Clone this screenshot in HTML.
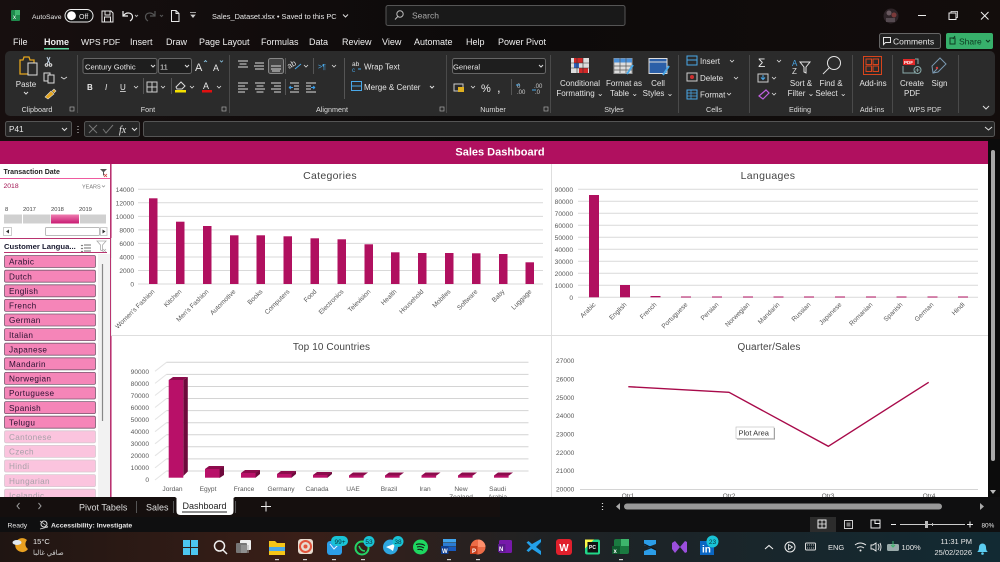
<!DOCTYPE html>
<html><head><meta charset="utf-8"><style>
html,body{margin:0;padding:0;background:#111;width:1000px;height:562px;overflow:hidden}
svg{display:block}
text{font-family:"Liberation Sans","Noto Sans CJK SC",sans-serif;fill:#e8e8e8;font-size:8px}
.m{font-size:9px;fill:#f0f0f0}
.r{font-size:8px;fill:#e4e4e4}
.g{font-size:7px;fill:#d0d0d0}
.c{font-size:6.6px;fill:#595959}
.a{font-size:6.6px;fill:#595959}
.t{font-size:10.5px;fill:#444;letter-spacing:.3px}
.s{font-size:8.2px;fill:#2a1030;letter-spacing:.35px}
.u{font-size:8.2px;fill:#a8a0a8;letter-spacing:.35px}
.b{fill:#f585b8;stroke:#7a5a70;stroke-width:.8}
.w{fill:#fbc4de;stroke:#d8c8d0;stroke-width:.8}
.ic{fill:none;stroke:#e6e6e6;stroke-width:1}
.badge{fill:#19c3d6}
.bt{font-size:6.5px;fill:#06343a;text-anchor:middle}
</style></head><body>
<svg width="1000" height="562" viewBox="0 0 1000 562" xmlns="http://www.w3.org/2000/svg">
<defs>
<linearGradient id="top" x1="0" x2="1" y1="0" y2="0"><stop offset="0" stop-color="#170f0f"/><stop offset=".5" stop-color="#0c0a0a"/><stop offset="1" stop-color="#130d0c"/></linearGradient>
<linearGradient id="tb" x1="0" x2="1" y1="0" y2="0"><stop offset="0" stop-color="#1f1512"/><stop offset=".3" stop-color="#3a1f18"/><stop offset=".55" stop-color="#1f2224"/><stop offset="1" stop-color="#122a33"/></linearGradient>
<linearGradient id="sel" x1="0" x2="0" y1="0" y2="1"><stop offset="0" stop-color="#ee7db0"/><stop offset="1" stop-color="#c81a72"/></linearGradient>
</defs>
<rect width="1000" height="141" fill="url(#top)"/>

<!-- title bar -->
<rect x="11" y="10" width="9" height="11" rx="1" fill="#1f8a4c"/><rect x="15" y="10" width="5" height="5" fill="#3fb56e"/>
<text x="13" y="19" style="font-size:6px;fill:#fff">x</text>
<text x="32" y="19" style="font-size:6.800px">AutoSave</text>
<rect x="65" y="9.500" width="28" height="12.500" rx="6.200" fill="#111" stroke="#eee"/><circle cx="71.500" cy="15.700" r="4.400" fill="#fff"/><text x="79" y="19" style="font-size:7px">Off</text>
<path class="ic" d="M102 11h9l2 2v9h-11zM105 11v4h5v-4M104.500 22v-5h6v5"/>
<path d="M123 11v5h5M123.500 15.500c3-4 9-3 9 1.500 0 2-1 3-2.500 4" fill="none" stroke="#eee" stroke-width="1.200"/>
<path d="M135 15l1.500 1.500L138 15" fill="none" stroke="#aaa"/>
<path d="M155 11v5h-5M154.500 15.500c-3-4-9-3-9 1.500 0 2 1 3 2.500 4" fill="none" stroke="#555" stroke-width="1.200"/>
<path d="M160 15l1.500 1.500L163 15" fill="none" stroke="#555"/>
<path class="ic" d="M171.500 10.500h4.500l3 3v8h-7.500zM176 10.500v3h3"/>
<path d="M190 12.500h6M191 15h4l-2 2.500z" fill="#ccc" stroke="#ccc" stroke-width=".7"/>
<text x="212" y="19" style="font-size:7.400px">Sales_Dataset.xlsx &#8226; Saved to this PC</text>
<path d="M343 14.500l2.500 2.500 2.500-2.500" fill="none" stroke="#ddd"/>
<rect x="386" y="5.500" width="239" height="20" rx="2" fill="#191919" stroke="#555"/>
<circle cx="400" cy="14" r="3.200" class="ic" style="stroke:#bbb"/><path d="M397.800 16.500l-2.800 3" stroke="#bbb"/>
<text x="412" y="18.500" style="font-size:8.500px;fill:#aaa">Search</text>
<circle cx="891" cy="16" r="7.500" fill="#2e2428"/><circle cx="889" cy="13" r="2.500" fill="#6a5a60"/><circle cx="894" cy="15" r="2.500" fill="#7a3a3a"/><rect x="886" y="18" width="9" height="4" fill="#554a50"/>
<path d="M918 15.500h8" stroke="#eee"/><rect x="949" y="13" width="7" height="6.500" fill="none" stroke="#eee"/><path d="M951 13v-1.500h6.500v6H956" fill="none" stroke="#eee" stroke-width=".8"/>
<path d="M981 12l7.500 7.500M988.500 12l-7.500 7.500" stroke="#eee"/>

<!-- menu -->
<text class="m" x="13" y="45">File</text><text class="m" x="44" y="45" style="font-weight:bold">Home</text>
<rect x="44" y="48" width="25" height="1.500" fill="#5ed6a0"/>
<text class="m" x="81" y="45" style="font-size:8.600px">WPS PDF</text><text class="m" x="130" y="45">Insert</text><text class="m" x="166" y="45">Draw</text><text class="m" x="199" y="45">Page Layout</text><text class="m" x="261" y="45">Formulas</text><text class="m" x="309" y="45">Data</text><text class="m" x="342" y="45">Review</text><text class="m" x="382" y="45">View</text><text class="m" x="414" y="45">Automate</text><text class="m" x="466" y="45">Help</text><text class="m" x="498" y="45">Power Pivot</text>
<rect x="879.500" y="33.500" width="61" height="15" rx="2" fill="#222" stroke="#666"/>
<path class="ic" d="M883.500 37.500h7v5h-5l-2 2z"/><text x="893" y="44.500" style="font-size:8.500px">Comments</text>
<rect x="946" y="33" width="47" height="16" rx="2" fill="#37b06b"/><text x="959" y="44.500" style="font-size:8.500px;fill:#0d3a20">Share</text>
<path d="M950 38h5v6h-5zM955 36l-2 3" fill="none" stroke="#0d3a20"/><path d="M986 40l2 2 2-2" fill="none" stroke="#0d3a20"/>

<!-- ribbon -->
<rect x="5" y="51" width="990" height="65" rx="5" fill="#2b2b2b"/>
<g stroke="#4a4a4a"><path d="M77.500 55v58M229.500 55v58M446.500 55v58M550.500 55v58M678.500 55v58M749.500 55v58M852.500 55v58M892.500 55v58M958.500 55v58"/></g>
<!-- clipboard -->
<path d="M20 60h3l1-3h5l1 3h4v3h-3v11h-11z" fill="none" stroke="#e3a41c" stroke-width="1.300"/><rect x="28" y="63" width="9" height="12" fill="#2b2b2b" stroke="#ddd"/>
<text x="26" y="87" class="r" text-anchor="middle">Paste</text><path d="M24 92l2 2 2-2" fill="none" stroke="#ddd"/>
<path d="M47 57l3 7M50 57l-3 7" stroke="#bcd" fill="none"/><circle cx="46.500" cy="65" r="1.300" class="ic"/><circle cx="50.500" cy="65" r="1.300" class="ic"/>
<rect x="44" y="73" width="6" height="8" fill="none" stroke="#ddd"/><rect x="48" y="75" width="6" height="8" fill="#2b2b2b" stroke="#ddd"/>
<path d="M61 77l3 2 3-2" fill="none" stroke="#ddd" stroke-width=".8"/>
<path d="M45 97l6-6 3 3-6 5zM52 91l2-2 2 2-2 2" fill="#e3a41c" stroke="#ddd" stroke-width=".6"/>
<text x="37" y="112" style="font-size:7.200px;fill:#ddd" text-anchor="middle">Clipboard</text>
<rect x="70" y="107" width="4" height="4" fill="none" stroke="#aaa" stroke-width=".7"/>
<!-- font -->
<rect x="83" y="58.500" width="74" height="15" rx="2" fill="#1e1e1e" stroke="#666"/><text x="85" y="69.500" style="font-size:7.600px">Century Gothic</text><path d="M151 65l2 2 2-2" fill="none" stroke="#ddd"/>
<rect x="158.500" y="58.500" width="33" height="15" rx="2" fill="#1e1e1e" stroke="#666"/><text x="160" y="69.500" style="font-size:7.600px">11</text><path d="M185 65l2 2 2-2" fill="none" stroke="#ddd"/>
<text x="195" y="71" style="font-size:11px">A</text><text x="213" y="71" style="font-size:9px">A</text>
<path d="M204 62l1.500-1.500L207 62M220 60.500l1.500 1.500 1.500-1.500" fill="none" stroke="#8cc8e8" stroke-width=".8"/>
<text x="87" y="90" style="font-size:8px;font-weight:bold">B</text><text x="105" y="90" style="font-size:8px;font-style:italic">I</text><text x="120" y="90" style="font-size:8px;text-decoration:underline">U</text>
<path d="M134 86l2 2 2-2M161 86l2 2 2-2M190 86l2 2 2-2M217 86l2 2 2-2" fill="none" stroke="#ddd" stroke-width=".8"/>
<path d="M143.500 78v16" stroke="#555"/><rect x="147" y="82" width="10" height="10" fill="none" stroke="#ccc"/><path d="M147 87h10M152 82v10" stroke="#ccc"/>
<path d="M171.500 78v16" stroke="#555"/><path d="M176 87l5-5 4 4-3 3h-5z" fill="none" stroke="#ddd"/><rect x="175" y="90" width="11" height="2.500" fill="#f4e000"/>
<text x="203" y="89" style="font-size:9px">A</text><rect x="202" y="90" width="10" height="2.500" fill="#e01010"/>
<text x="148" y="112" style="font-size:7.200px;fill:#ddd" text-anchor="middle">Font</text>
<rect x="222" y="107" width="4" height="4" fill="none" stroke="#aaa" stroke-width=".7"/>
<!-- alignment -->
<g stroke="#dcdcdc" fill="none"><path d="M238 61h10M239.500 64h7M238 67h10"/><path d="M255 63h9M254 66h10M255 69h9"/>
<rect x="268.500" y="58.500" width="15" height="15" rx="2" fill="#444" stroke="#888"/><path d="M271 66h10M271 69h10M272 71h8"/>
<path d="M238 83h10M238 86h7M238 89h10M238 92h7M255 83h10M256.500 86h7M255 89h10M256.500 92h7M271 83h10M274 86h7M271 89h10M274 92h7"/>
<path d="M290 83h9M290 92h9M294 86h5M294 89h5"/><path d="M306 83h10M306 92h10M306 86h5M306 89h5"/></g>
<path d="M289 87.500h4M289 87.500l2-1.500M289 87.500l2 1.500M311 87.500h4M315 87.500l-2-1.500M315 87.500l-2 1.500" stroke="#3b9de8" fill="none"/>
<text x="289" y="69" style="font-size:8px;fill:#ddd" transform="rotate(-30 289 69)">ab</text><path d="M295 69l6-5" stroke="#4aa8e8"/><path d="M304 65l2 2 2-2M332 65l2 2 2-2" fill="none" stroke="#ddd" stroke-width=".8"/>
<path d="M285.500 58v16M313.500 58v16M285.500 79v16" stroke="#555"/>
<text x="318" y="69" style="font-size:7px;fill:#4aa8e8">&gt;&#182;</text>
<path d="M344.500 58v41" stroke="#555"/>
<text x="352" y="66" style="font-size:6.500px">ab</text><text x="352" y="72" style="font-size:6px;fill:#4aa8e8">c</text><path d="M358 69h3" stroke="#4aa8e8"/>
<text x="364" y="69.500" class="r">Wrap Text</text>
<rect x="351.500" y="81.500" width="10" height="9" fill="none" stroke="#4aa8e8"/><path d="M352 86h9" stroke="#4aa8e8"/>
<text x="364" y="90" class="r">Merge &amp; Center</text><path d="M430 86l2 2 2-2" fill="none" stroke="#ddd"/>
<text x="332" y="112" style="font-size:7.200px;fill:#ddd" text-anchor="middle">Alignment</text>
<rect x="440" y="107" width="4" height="4" fill="none" stroke="#aaa" stroke-width=".7"/>
<!-- number -->
<rect x="452.500" y="58.500" width="93" height="15" rx="2" fill="#1e1e1e" stroke="#666"/><text x="453" y="69.500" style="font-size:7.600px">General</text><path d="M539 65l2 2 2-2" fill="none" stroke="#ddd"/>
<rect x="454" y="84" width="9" height="7" fill="none" stroke="#ccc"/><rect x="458" y="87" width="6" height="5" fill="#e0b020"/>
<path d="M471 86l2 2 2-2" fill="none" stroke="#ddd" stroke-width=".8"/><text x="481" y="92" style="font-size:11px">%</text><text x="497" y="92" style="font-size:13px">,</text>
<path d="M511.500 79v16" stroke="#555"/><text x="517" y="88" style="font-size:6px;fill:#ccc">0</text><text x="517" y="94" style="font-size:6px;fill:#ccc">.00</text><path d="M516 85h4" stroke="#4aa8e8"/>
<text x="534" y="88" style="font-size:6px;fill:#ccc">.00</text><text x="535" y="94" style="font-size:6px;fill:#ccc">.0</text><path d="M532 90h4" stroke="#4aa8e8"/>
<text x="493" y="112" style="font-size:7.200px;fill:#ddd" text-anchor="middle">Number</text>
<rect x="544" y="107" width="4" height="4" fill="none" stroke="#aaa" stroke-width=".7"/>
<!-- styles -->
<rect x="571" y="58" width="18" height="15" fill="#ddd"/><rect x="574" y="58" width="9" height="5" fill="#d02828"/><rect x="574" y="63" width="5" height="5" fill="#3060c0"/><rect x="579" y="68" width="9" height="5" fill="#d02828"/><path d="M571 63h18M571 68h18M577 58v15M583 58v15" stroke="#333" stroke-width=".6"/>
<text x="580" y="86" class="r" text-anchor="middle">Conditional</text><text x="580" y="96" class="r" text-anchor="middle">Formatting &#8964;</text>
<rect x="614" y="58.500" width="18" height="15" fill="#ddd" stroke="#999"/><rect x="614" y="58.500" width="18" height="4" fill="#4a90d8"/><path d="M614 66h18M614 70h18M620 58v15M626 58v15" stroke="#555" stroke-width=".7"/><path d="M627 74l6-9" stroke="#4aa8e8" stroke-width="2"/>
<text x="624" y="86" class="r" text-anchor="middle">Format as</text><text x="624" y="96" class="r" text-anchor="middle">Table &#8964;</text>
<rect x="649" y="58.500" width="18" height="15" fill="#2b5fa8" stroke="#ddd"/><path d="M649 62h18" stroke="#ddd"/><path d="M663 75l6-9" stroke="#4aa8e8" stroke-width="2"/>
<text x="658" y="86" class="r" text-anchor="middle">Cell</text><text x="658" y="96" class="r" text-anchor="middle">Styles &#8964;</text>
<text x="614" y="112" style="font-size:7.200px;fill:#ddd" text-anchor="middle">Styles</text>
<!-- cells -->
<rect x="687" y="56" width="10" height="9" fill="none" stroke="#4aa8e8"/><path d="M687 60h10" stroke="#4aa8e8"/>
<rect x="687" y="73" width="10" height="8" fill="none" stroke="#ccc"/><circle cx="692" cy="77" r="2" fill="#d03030"/>
<rect x="687" y="90" width="10" height="9" fill="none" stroke="#4aa8e8"/><path d="M687 93h10M687 96h10M691 90v9" stroke="#4aa8e8" stroke-width=".7"/>
<text x="700" y="64" class="r">Insert</text><text x="700" y="81" class="r">Delete</text><text x="700" y="97.500" class="r">Format</text>
<path d="M730 60l2 2 2-2M734 77l2 2 2-2M727 93l2 2 2-2" fill="none" stroke="#ddd" stroke-width=".8"/>
<text x="714" y="112" style="font-size:7.200px;fill:#ddd" text-anchor="middle">Cells</text>
<!-- editing -->
<text x="758" y="67" style="font-size:12px">&#931;</text><path d="M777 60l2 2 2-2M772 77l2 2 2-2M772 93l2 2 2-2" fill="none" stroke="#ddd" stroke-width=".8"/>
<rect x="758" y="74" width="10" height="8" fill="none" stroke="#ccc"/><path d="M763 75v4M761 77.500l2 2 2-2" stroke="#4aa8e8" fill="none"/>
<path d="M759 96l7-6 3 3-6 6z" fill="none" stroke="#c060e0" stroke-width="1.200"/>
<text x="792" y="66" style="font-size:8px;fill:#4aa8e8">A</text><text x="792" y="74" style="font-size:8px;fill:#ddd">Z</text>
<path class="ic" d="M800 62h10l-4 5v6l-2-1v-5z"/>
<text x="801" y="86" class="r" text-anchor="middle">Sort &amp;</text><text x="801" y="96" class="r" text-anchor="middle">Filter &#8964;</text>
<circle cx="834" cy="63" r="6.500" class="ic"/><path d="M829 68l-6 6" stroke="#ddd"/>
<text x="831" y="86" class="r" text-anchor="middle">Find &amp;</text><text x="831" y="96" class="r" text-anchor="middle">Select &#8964;</text>
<text x="800" y="112" style="font-size:7.200px;fill:#ddd" text-anchor="middle">Editing</text>
<!-- addins -->
<rect x="863.500" y="56.500" width="18" height="18" fill="none" stroke="#d8441c"/><rect x="866" y="59" width="5.500" height="5.500" fill="none" stroke="#d8441c"/><rect x="873" y="59" width="5.500" height="5.500" fill="none" stroke="#d8441c"/><rect x="866" y="66" width="5.500" height="5.500" fill="none" stroke="#d8441c"/><rect x="873" y="66" width="5.500" height="5.500" fill="none" stroke="#d8441c"/>
<text x="873" y="86" class="r" text-anchor="middle">Add-ins</text>
<text x="872" y="112" style="font-size:7.200px;fill:#ddd" text-anchor="middle">Add-ins</text>
<!-- wps -->
<rect x="903" y="59" width="12" height="6" fill="#e02828"/><text x="904" y="64" style="font-size:4.500px;font-weight:bold;fill:#fff">PDF</text><path class="ic" d="M903 66v7h12v-2M915 59h3v5" style="stroke:#8aa"/><circle cx="917.500" cy="70" r="3.500" class="ic" style="stroke:#8aa"/><path d="M915.500 70h4M917.500 68v4" stroke="#8aa" stroke-width=".7"/>
<text x="912" y="86" class="r" text-anchor="middle">Create</text><text x="912" y="96" class="r" text-anchor="middle">PDF</text>
<path class="ic" d="M933 73l-1-7 8-8 6 6-8 8zM933 73l4-4" style="stroke:#7a98b0"/><circle cx="937" cy="68" r="1.200" fill="#d04040"/>
<text x="939.500" y="86" class="r" text-anchor="middle">Sign</text>
<text x="925" y="112" style="font-size:7.200px;fill:#ddd" text-anchor="middle">WPS PDF</text>
<path d="M983 106l3 3 3-3" fill="none" stroke="#ddd"/>

<!-- formula bar -->
<rect x="5.500" y="121.500" width="66" height="15" rx="2" fill="#262626" stroke="#555"/><text x="9" y="132" style="font-size:8.200px">P41</text><path d="M62 128l2.500 2.500 2.500-2.500" fill="none" stroke="#ddd"/>
<path d="M78 126v.8M78 129v.8M78 132v.8" stroke="#ddd" stroke-width="1.300"/>
<rect x="84.500" y="121.500" width="55" height="15" rx="2" fill="#262626" stroke="#555"/>
<path d="M89 125l8 8M97 125l-8 8M103 129l3 4 7-8" stroke="#777" fill="none"/>
<text x="119" y="133" style="font-size:10px;font-style:italic;font-family:'Liberation Serif',serif">fx</text><path d="M132 128l2.500 2.500 2.500-2.500" fill="none" stroke="#ddd"/>
<rect x="143.500" y="121.500" width="851" height="15" rx="2" fill="#262626" stroke="#555"/><path d="M985 127l3.500 3 3.500-3" fill="none" stroke="#ddd"/>

<!-- sheet -->
<rect x="0" y="141" width="988" height="356" fill="#fff"/>
<rect x="0" y="141" width="988" height="23" fill="#b0105f"/>
<text x="500" y="155.500" text-anchor="middle" style="font-size:11px;font-weight:bold;fill:#fff">Sales Dashboard</text>
<rect x="988" y="139" width="12" height="358" fill="#0c0c0c"/>
<rect x="991" y="150" width="4" height="311" rx="2" fill="#a8a8a8"/><path d="M990 490h6l-3 4z" fill="#bbb"/>
<path d="M111 164v74" stroke="#b0105f"/><path d="M111.500 238v20" stroke="#e8e8e8"/><path d="M111 335v162" stroke="#b0105f"/>
<path d="M111 258v77" stroke="#e6e0e4"/>
<path d="M551.500 164v333M111 335.500h877" stroke="#dedede"/>

<!-- slicer 1 -->
<rect x="0" y="164" width="110" height="74" fill="#fff"/>
<path d="M110.500 164v333" stroke="#b8336f"/>
<text x="3.500" y="174" style="font-size:7px;font-weight:bold;fill:#222">Transaction Date</text>
<path d="M100 169h7l-3 3v4l-1-1v-3z" fill="#555"/><path d="M104 174l3 3M107 174l-3 3" stroke="#d04040" stroke-width=".8"/>
<path d="M0 178.500h110" stroke="#ef5ba0"/>
<text x="3.500" y="188" style="font-size:6.800px;fill:#a0104f">2018</text>
<text x="82" y="188.500" style="font-size:5.500px;fill:#777">YEARS</text><path d="M102 185.500l1.500 1.500 1.500-1.500" fill="none" stroke="#888" stroke-width=".7"/>
<text x="5" y="211" style="font-size:5.800px;fill:#444">8</text><text x="23" y="211" style="font-size:5.800px;fill:#444">2017</text><text x="51" y="211" style="font-size:5.800px;fill:#444">2018</text><text x="79" y="211" style="font-size:5.800px;fill:#444">2019</text>
<rect x="4" y="214.500" width="18" height="9" fill="#d0d0d0"/><rect x="23" y="214.500" width="27.500" height="9" fill="#d0d0d0"/><rect x="51" y="214.500" width="28" height="9" fill="url(#sel)"/><rect x="80" y="214.500" width="26" height="9" fill="#d0d0d0"/>
<rect x="3.500" y="227.500" width="8" height="8" fill="#fff" stroke="#ccc"/><path d="M9 229.500l-3 2 3 2z" fill="#333"/>
<rect x="45.500" y="227.500" width="54" height="8" rx="1" fill="#fff" stroke="#bbb"/>
<rect x="100.500" y="227.500" width="6.500" height="8" fill="#fff" stroke="#ccc"/><path d="M102.500 229.500l3 2-3 2z" fill="#333"/>
<path d="M0 238.500h110" stroke="#b8336f"/>

<!-- slicer 2 -->
<text x="4" y="249" style="font-size:7.700px;font-weight:bold;fill:#1a1a30">Customer Langua...</text>
<path d="M84 245h7M84 248h7M84 251h7" stroke="#444" stroke-width=".8"/><path d="M81 245l1 1 1-1M81 248l1 1 1-1M81 251l1 1 1-1" stroke="#444" stroke-width=".6" fill="none"/>
<path d="M97 241h9l-3.500 4v6l-2-1v-5z" fill="none" stroke="#aaa" stroke-width=".8"/><path d="M103 249l3 3M106 249l-3 3" stroke="#aaa" stroke-width=".7"/>
<path d="M4 252.500h103" stroke="#b8336f"/>
<rect x="98" y="254" width="12" height="243" fill="#f2f2f2"/><path d="M102.500 264v157" stroke="#888" stroke-width="1.200"/>
<g>
<rect class="b" x="4.500" y="255.500" width="91" height="12" rx="1.500"/><text class="s" x="9" y="264.700">Arabic</text>
<rect class="b" x="4.500" y="270.200" width="91" height="12" rx="1.500"/><text class="s" x="9" y="279.400">Dutch</text>
<rect class="b" x="4.500" y="284.800" width="91" height="12" rx="1.500"/><text class="s" x="9" y="294">English</text>
<rect class="b" x="4.500" y="299.400" width="91" height="12" rx="1.500"/><text class="s" x="9" y="308.600">French</text>
<rect class="b" x="4.500" y="314" width="91" height="12" rx="1.500"/><text class="s" x="9" y="323.200">German</text>
<rect class="b" x="4.500" y="328.600" width="91" height="12" rx="1.500"/><text class="s" x="9" y="337.800">Italian</text>
<rect class="b" x="4.500" y="343.200" width="91" height="12" rx="1.500"/><text class="s" x="9" y="352.400">Japanese</text>
<rect class="b" x="4.500" y="357.800" width="91" height="12" rx="1.500"/><text class="s" x="9" y="367">Mandarin</text>
<rect class="b" x="4.500" y="372.400" width="91" height="12" rx="1.500"/><text class="s" x="9" y="381.600">Norwegian</text>
<rect class="b" x="4.500" y="387" width="91" height="12" rx="1.500"/><text class="s" x="9" y="396.200">Portuguese</text>
<rect class="b" x="4.500" y="401.600" width="91" height="12" rx="1.500"/><text class="s" x="9" y="410.800">Spanish</text>
<rect class="b" x="4.500" y="416.200" width="91" height="12" rx="1.500"/><text class="s" x="9" y="425.400">Telugu</text>
<rect class="w" x="4.500" y="430.800" width="91" height="12" rx="1.500"/><text class="u" x="9" y="440">Cantonese</text>
<rect class="w" x="4.500" y="445.400" width="91" height="12" rx="1.500"/><text class="u" x="9" y="454.600">Czech</text>
<rect class="w" x="4.500" y="460" width="91" height="12" rx="1.500"/><text class="u" x="9" y="469.200">Hindi</text>
<rect class="w" x="4.500" y="474.600" width="91" height="12" rx="1.500"/><text class="u" x="9" y="483.800">Hungarian</text>
<rect class="w" x="4.500" y="489.200" width="91" height="12" rx="1.500"/><text class="u" x="9" y="498.400">Icelandic</text>
</g>

<!-- Categories -->
<text class="t" x="330" y="179" text-anchor="middle">Categories</text>
<path d="M138 189.300h405M138 202.800h405M138 216.400h405M138 229.900h405M138 243.400h405M138 257h405M138 270.500h405M138 284h405" stroke="#d9d9d9"/>
<g text-anchor="end"><text class="a" x="134" y="192">14000</text><text class="a" x="134" y="205.500">12000</text><text class="a" x="134" y="219">10000</text><text class="a" x="134" y="232.500">8000</text><text class="a" x="134" y="246">6000</text><text class="a" x="134" y="259.500">4000</text><text class="a" x="134" y="273">2000</text><text class="a" x="134" y="286.500">0</text></g>
<g fill="#b0105f">
<rect x="149" y="198.300" width="8.500" height="85.700"/><rect x="176" y="221.700" width="8.500" height="62.300"/><rect x="203" y="226" width="8.500" height="58"/><rect x="230" y="235.300" width="8.500" height="48.700"/><rect x="256.500" y="235.300" width="8.500" height="48.700"/><rect x="283.500" y="236.300" width="8.500" height="47.700"/><rect x="310.500" y="238.300" width="8.500" height="45.700"/><rect x="337.500" y="239.300" width="8.500" height="44.700"/><rect x="364.500" y="244.300" width="8.500" height="39.700"/><rect x="391" y="252.300" width="8.500" height="31.700"/><rect x="418" y="253" width="8.500" height="31"/><rect x="445" y="253" width="8.500" height="31"/><rect x="472" y="253.300" width="8.500" height="30.700"/><rect x="499" y="254" width="8.500" height="30"/><rect x="525.500" y="262.300" width="8.500" height="21.700"/>
</g>
<g text-anchor="end">
<text class="c" transform="rotate(-45 155 292)" x="155" y="292">Women's Fashion</text>
<text class="c" transform="rotate(-45 182 292)" x="182" y="292">Kitchen</text>
<text class="c" transform="rotate(-45 209 292)" x="209" y="292">Men's Fashion</text>
<text class="c" transform="rotate(-45 236 292)" x="236" y="292">Automotive</text>
<text class="c" transform="rotate(-45 263 292)" x="263" y="292">Books</text>
<text class="c" transform="rotate(-45 290 292)" x="290" y="292">Computers</text>
<text class="c" transform="rotate(-45 317 292)" x="317" y="292">Food</text>
<text class="c" transform="rotate(-45 344 292)" x="344" y="292">Electronics</text>
<text class="c" transform="rotate(-45 371 292)" x="371" y="292">Television</text>
<text class="c" transform="rotate(-45 397 292)" x="397" y="292">Health</text>
<text class="c" transform="rotate(-45 424 292)" x="424" y="292">Household</text>
<text class="c" transform="rotate(-45 451 292)" x="451" y="292">Mobiles</text>
<text class="c" transform="rotate(-45 478 292)" x="478" y="292">Software</text>
<text class="c" transform="rotate(-45 505 292)" x="505" y="292">Baby</text>
<text class="c" transform="rotate(-45 532 292)" x="532" y="292">Luggage</text>
</g>

<!-- Languages -->
<text class="t" x="768" y="179" text-anchor="middle">Languages</text>
<path d="M578 189.300h400M578 201.300h400M578 213.300h400M578 225.300h400M578 237.300h400M578 249.300h400M578 261.300h400M578 273.300h400M578 285.300h400M578 297.300h400" stroke="#d9d9d9"/>
<g text-anchor="end"><text class="a" x="573" y="192">90000</text><text class="a" x="573" y="204">80000</text><text class="a" x="573" y="216">70000</text><text class="a" x="573" y="228">60000</text><text class="a" x="573" y="240">50000</text><text class="a" x="573" y="252">40000</text><text class="a" x="573" y="264">30000</text><text class="a" x="573" y="276">20000</text><text class="a" x="573" y="288">10000</text><text class="a" x="573" y="300">0</text></g>
<g fill="#b0105f"><rect x="589" y="195" width="10" height="102.300"/><rect x="620" y="285" width="10" height="12.300"/><rect x="650.500" y="296" width="10" height="1.300"/><rect x="681" y="296.500" width="10" height="1"/><rect x="712" y="296.500" width="10" height="1"/><rect x="743" y="296.500" width="10" height="1"/><rect x="773.500" y="296.500" width="10" height="1"/><rect x="804" y="296.500" width="10" height="1"/><rect x="835" y="296.500" width="10" height="1"/><rect x="866" y="296.500" width="10" height="1"/><rect x="896.500" y="296.500" width="10" height="1"/><rect x="927.500" y="296.500" width="10" height="1"/><rect x="958" y="296.500" width="10" height="1"/></g>
<g text-anchor="end">
<text class="c" transform="rotate(-45 596 305)" x="596" y="305">Arabic</text>
<text class="c" transform="rotate(-45 627 305)" x="627" y="305">English</text>
<text class="c" transform="rotate(-45 657 305)" x="657" y="305">French</text>
<text class="c" transform="rotate(-45 688 305)" x="688" y="305">Portuguese</text>
<text class="c" transform="rotate(-45 719 305)" x="719" y="305">Persian</text>
<text class="c" transform="rotate(-45 750 305)" x="750" y="305">Norwegian</text>
<text class="c" transform="rotate(-45 780 305)" x="780" y="305">Mandarin</text>
<text class="c" transform="rotate(-45 811 305)" x="811" y="305">Russian</text>
<text class="c" transform="rotate(-45 842 305)" x="842" y="305">Japanese</text>
<text class="c" transform="rotate(-45 873 305)" x="873" y="305">Romanian</text>
<text class="c" transform="rotate(-45 903 305)" x="903" y="305">Spanish</text>
<text class="c" transform="rotate(-45 934 305)" x="934" y="305">German</text>
<text class="c" transform="rotate(-45 965 305)" x="965" y="305">Hindi</text>
</g>

<!-- Top 10 -->
<text class="t" x="331.500" y="350" text-anchor="middle" style="font-size:10px;letter-spacing:.1px">Top 10 Countries</text>
<path d="M166.500 362.300h362M166.500 374.400h362M166.500 386.500h362M166.500 398.500h362M166.500 410.600h362M166.500 422.700h362M166.500 434.800h362M166.500 446.800h362M166.500 458.900h362M166.500 471h362" stroke="#d4d4d4"/>
<path d="M155 371.300l11.500-9M155 383.400l11.500-9M155 395.500l11.500-9M155 407.500l11.500-9M155 419.600l11.500-9M155 431.700l11.500-9M155 443.800l11.500-9M155 455.800l11.500-9M155 467.900l11.500-9M155 480l11.500-9" stroke="#e4e4e4"/>
<g text-anchor="end"><text class="a" x="149" y="374">90000</text><text class="a" x="149" y="386">80000</text><text class="a" x="149" y="398">70000</text><text class="a" x="149" y="410">60000</text><text class="a" x="149" y="422">50000</text><text class="a" x="149" y="434">40000</text><text class="a" x="149" y="446">30000</text><text class="a" x="149" y="458">20000</text><text class="a" x="149" y="470">10000</text><text class="a" x="149" y="482">0</text></g>
<g>
<path d="M168.700 380l4.300-3h14.800l-4.500 3z" fill="#8c0c4c"/><path d="M183.300 380l4.500-3v94.500l-4.500 4.500z" fill="#6e0a3c"/><rect x="168.700" y="380" width="14.600" height="97.700" fill="#b81068"/>
<path d="M205 469l4-3h15l-4 3z" fill="#8c0c4c"/><path d="M219.500 469l4.500-3v9l-4.500 3z" fill="#6e0a3c"/><rect x="205" y="469" width="14.600" height="8.700" fill="#b81068"/>
<path d="M241 473l4-3h15l-4 3z" fill="#8c0c4c"/><path d="M255.500 473l4.500-3v4l-4.500 3.700z" fill="#6e0a3c"/><rect x="241" y="473" width="14.600" height="4.700" fill="#b81068"/>
<path d="M277 474l4-3h15l-4 3z" fill="#8c0c4c"/><path d="M291.500 474l4.500-3v3l-4.500 3.700z" fill="#6e0a3c"/><rect x="277" y="474" width="14.600" height="3.700" fill="#b81068"/>
<path d="M313 475l4-3h15l-4 3z" fill="#8c0c4c"/><path d="M327.500 475l4.500-3v2l-4.500 3.700z" fill="#6e0a3c"/><rect x="313" y="475" width="14.600" height="2.700" fill="#b81068"/>
<path d="M349 475.500l4-3h15l-4 3z" fill="#8c0c4c"/><rect x="349" y="475.500" width="14.600" height="2.200" fill="#b81068"/>
<path d="M385 475.500l4-3h15l-4 3z" fill="#8c0c4c"/><rect x="385" y="475.500" width="14.600" height="2.200" fill="#b81068"/>
<path d="M421.500 475.500l4-3h15l-4 3z" fill="#8c0c4c"/><rect x="421.500" y="475.500" width="14.600" height="2.200" fill="#b81068"/>
<path d="M458 475.500l4-3h15l-4 3z" fill="#8c0c4c"/><rect x="458" y="475.500" width="14.600" height="2.200" fill="#b81068"/>
<path d="M494 475.500l4-3h15l-4 3z" fill="#8c0c4c"/><rect x="494" y="475.500" width="14.600" height="2.200" fill="#b81068"/>
</g>
<g text-anchor="middle">
<text class="c" x="172.500" y="491">Jordan</text><text class="c" x="208" y="491">Egypt</text><text class="c" x="244" y="491">France</text><text class="c" x="281" y="491">Germany</text><text class="c" x="317" y="491">Canada</text><text class="c" x="353" y="491">UAE</text><text class="c" x="389" y="491">Brazil</text><text class="c" x="425" y="491">Iran</text><text class="c" x="461" y="491">New</text><text class="c" x="461" y="499">Zealand</text><text class="c" x="497.500" y="491">Saudi</text><text class="c" x="497.500" y="499">Arabia</text>
</g>

<!-- Quarter -->
<text class="t" x="769" y="350" text-anchor="middle" style="font-size:10px;letter-spacing:.1px">Quarter/Sales</text>
<g><text class="a" x="556" y="363">27000</text><text class="a" x="556" y="381.500">26000</text><text class="a" x="556" y="400">25000</text><text class="a" x="556" y="418">24000</text><text class="a" x="556" y="436.500">23000</text><text class="a" x="556" y="455">22000</text><text class="a" x="556" y="473">21000</text><text class="a" x="556" y="491.500">20000</text></g>
<path d="M580 489.500h398" stroke="#d4d4d4"/>
<path d="M628.300 386.700L729 392.300 828.300 446.300 928.700 382.300" fill="none" stroke="#a80a4a" stroke-width="1.400"/>
<g text-anchor="middle"><text class="c" x="628" y="498">Qtr1</text><text class="c" x="729" y="498">Qtr2</text><text class="c" x="828" y="498">Qtr3</text><text class="c" x="929" y="498">Qtr4</text></g>
<rect x="737" y="428" width="38" height="11.500" fill="#999"/><rect x="736" y="427" width="38" height="11.500" fill="#fff" stroke="#bbb" stroke-width=".6"/>
<text x="738.500" y="435.500" style="font-size:7.500px;fill:#333">Plot Area</text>

<!-- tabs -->
<rect x="0" y="497" width="1000" height="20" fill="#150f0e"/>
<rect x="500" y="497" width="500" height="20" fill="#0f0f10"/>
<path d="M19.500 503l-2.500 3 2.500 3M38.500 503l2.500 3-2.500 3" fill="none" stroke="#999"/>
<text x="79" y="510.500" style="font-size:9px;fill:#ddd">Pivot Tabels</text>
<path d="M136.500 501v12" stroke="#555"/><text x="146" y="510.500" style="font-size:9px;fill:#ddd">Sales</text><path d="M173.500 501v12" stroke="#555"/>
<path d="M175 497h60l-1.500 1v13q0 4-4 4h-49q-4 0-4-4v-13z" fill="#fff"/>
<text x="182.500" y="509" style="font-size:9px;fill:#222">Dashboard</text><path d="M182 512h45" stroke="#222"/>
<path d="M235.500 501v12" stroke="#555"/><path d="M261 506.500h10M266 501.500v10" stroke="#eee"/>
<path d="M602.500 503v1M602.500 506v1M602.500 509v1" stroke="#ddd" stroke-width="1.200"/>
<path d="M620 503l-4 3.500 4 3.500z" fill="#aaa"/>
<rect x="624" y="503.500" width="318" height="6" rx="3" fill="#999"/>
<path d="M980 503l4 3.500-4 3.500z" fill="#aaa"/>

<!-- status -->
<rect x="0" y="517" width="1000" height="15" fill="#0f0f10"/>
<text x="7.500" y="527.500" style="font-size:6.800px">Ready</text>
<circle cx="44" cy="524" r="3" fill="none" stroke="#ddd"/><path d="M40 529l8-2M40 521l8 6" stroke="#ddd" stroke-width=".7"/>
<text x="51" y="527.500" style="font-size:6.800px;font-weight:bold">Accessibility: Investigate</text>
<rect x="810" y="517" width="26" height="15" fill="#2c2c2c"/>
<rect x="818" y="520" width="8" height="8" fill="none" stroke="#eee"/><path d="M818 524h8M822 520v8" stroke="#eee" stroke-width=".8"/>
<rect x="844.500" y="520.500" width="8" height="8" fill="none" stroke="#ccc"/><rect x="846.500" y="522.500" width="4" height="4" fill="#777"/>
<rect x="871" y="520" width="9" height="8" fill="none" stroke="#eee"/><path d="M875 520v3.500h5" fill="none" stroke="#eee"/>
<path d="M891 524.500h5M967 524.500h6M970 521.500v6" stroke="#eee"/><path d="M900 524.500h65" stroke="#ccc"/><rect x="925" y="521" width="3" height="7" fill="#bbb"/><path d="M932.500 523v3" stroke="#bbb"/>
<text x="981.500" y="527.500" style="font-size:6.400px">80%</text>

<!-- taskbar -->
<rect x="0" y="532" width="1000" height="30" fill="url(#tb)"/>
<path d="M27 540a7 7 0 1 0 1 9 6 6 0 0 1-1-9z" fill="#e8a020"/><ellipse cx="17" cy="542.500" rx="4.500" ry="2.500" fill="#dfe8f0"/>
<text x="33" y="544" style="font-size:7.500px">15°C</text>
<text x="33" y="555" style="font-size:6.800px;fill:#ccc">صافي غالبا</text>
<!-- win logo -->
<g fill="#4cc6f0"><rect x="183" y="540" width="7" height="7"/><rect x="191" y="540" width="7" height="7"/><rect x="183" y="548" width="7" height="7"/><rect x="191" y="548" width="7" height="7"/></g>
<circle cx="219.500" cy="546" r="5" fill="none" stroke="#eee" stroke-width="1.500"/><path d="M223 550l4 4" stroke="#eee" stroke-width="1.500"/>
<rect x="240" y="540" width="11" height="10" rx="1" fill="#eee"/><rect x="236" y="543" width="11" height="10" rx="1" fill="#777"/><rect x="241" y="545" width="8" height="8" fill="#aaa" opacity=".5"/>
<path d="M269 541h6l2 2h8v12h-16z" fill="#f5c518"/><rect x="269" y="547" width="16" height="4" fill="#4aa8e8"/>
<rect x="298" y="539" width="15" height="15" rx="3" fill="#e8dcd0"/><circle cx="305.500" cy="546.500" r="5.500" fill="none" stroke="#e2553d" stroke-width="2"/><circle cx="305.500" cy="546.500" r="2" fill="#e2553d"/>
<rect x="327" y="541" width="15" height="14" rx="3" fill="#2c9ee8"/><path d="M330 544l4 5 5-5" fill="none" stroke="#eaf6ff"/>
<rect x="331" y="536" width="17" height="10" rx="5" class="badge"/><text class="bt" x="340" y="544">99+</text>
<circle cx="362" cy="548" r="6.500" fill="none" stroke="#25d366" stroke-width="2"/><path d="M359 546c1 3 3 5 6 5" stroke="#25d366" fill="none" stroke-width="1.500"/><circle cx="369" cy="541.500" r="5.500" class="badge"/><text class="bt" x="369" y="544">53</text>
<circle cx="390.500" cy="547" r="7.500" fill="#2ea6e0"/><path d="M386 547l9-3.500-2 7.500-3-2z" fill="#fff"/><circle cx="398" cy="541.500" r="5.500" class="badge"/><text class="bt" x="398" y="544">38</text>
<circle cx="420.500" cy="547" r="7.500" fill="#1ed760"/><path d="M416 544.500q5-1.500 9 1M417 547q4-1 7 1M417.500 549.500q3-.8 5.500.8" stroke="#111" fill="none"/>
<rect x="443" y="539" width="13" height="3.500" fill="#41a5ee"/><rect x="443" y="543" width="13" height="3.500" fill="#2b7cd3"/><rect x="443" y="547" width="13" height="4" fill="#185abd"/><rect x="441" y="546" width="7.500" height="8" fill="#103f91"/><text x="442" y="553" style="font-size:6px;font-weight:bold;fill:#fff">W</text>
<circle cx="478" cy="547" r="7.500" fill="#ed6c47"/><path d="M478 539.500a7.500 7.500 0 0 1 7.500 7.500H478z" fill="#ff8f6b"/><rect x="470" y="546" width="7.500" height="8" fill="#c43e1c"/><text x="472" y="553" style="font-size:6px;font-weight:bold;fill:#fff">P</text>
<rect x="499" y="540" width="13" height="13" rx="1.500" fill="#7719aa"/><rect x="498" y="544" width="7.500" height="8" fill="#5a1a8c"/><text x="499" y="551" style="font-size:6px;font-weight:bold;fill:#fff">N</text>
<path d="M541 539v16l-9-6-3.500 3-2-1.500 4-4-4-4 2-1.500 3.500 3z" fill="#23a0e8"/><path d="M541 542l-5 5 5 4z" fill="#0f2a3a"/>
<rect x="556" y="539" width="16" height="16" rx="3" fill="#e0202c"/><text x="564" y="551" text-anchor="middle" style="font-size:10px;font-weight:bold;fill:#fff">W</text>
<rect x="585" y="539.500" width="15" height="15" rx="2" fill="#21d789"/><path d="M585 539.500h9l-9 9z" fill="#fcf84a"/><rect x="587.500" y="542" width="10.500" height="10.500" fill="#111"/><text x="589" y="549" style="font-size:5px;font-weight:bold;fill:#fff">PC</text>
<rect x="614" y="539" width="15" height="15" rx="2" fill="#1a7a40"/><rect x="621" y="539" width="8" height="7" fill="#3db56c"/><rect x="612" y="546" width="8" height="8" fill="#0f5a2e"/><text x="613.500" y="553" style="font-size:6px;font-weight:bold;fill:#fff">x</text>
<path d="M644 540h12v4l-8 3 8 3v5h-12v-4l8-3-8-3z" fill="#2b9de8"/><path d="M644 544l12 6" stroke="#111"/>
<path d="M672 549v-6l3-2 5 6 5-6 2 1v10l-2 1-5-6-5 6z" fill="#9b4fdc"/>
<rect x="700" y="541" width="14" height="14" fill="#0a66c2"/><text x="702" y="552.500" style="font-size:10px;font-weight:bold;fill:#fff">in</text><circle cx="712.500" cy="541.500" r="6" class="badge"/><text class="bt" x="712.500" y="544">23</text>
<g fill="#ccc"><rect x="275" y="559" width="4" height="1.200"/><rect x="303" y="559" width="4" height="1.200"/><rect x="332" y="559" width="4" height="1.200"/><rect x="361" y="559" width="4" height="1.200"/><rect x="447" y="559" width="4" height="1.200"/><rect x="476" y="559" width="4" height="1.200"/><rect x="619" y="559" width="4" height="1.200"/></g>
<!-- tray -->
<path d="M765 549l4-3.500 4 3.500" fill="none" stroke="#eee" stroke-width="1.100"/>
<circle cx="790" cy="547" r="5" fill="none" stroke="#eee"/><path d="M788.500 544.500l4 2.500-4 2.500z" fill="none" stroke="#eee" stroke-width=".8"/>
<rect x="805.500" y="543" width="10" height="7" rx="1" fill="none" stroke="#ddd"/><path d="M807 545h7M807 548h7" stroke="#aaa" stroke-dasharray="1 1"/>
<text x="828" y="550" style="font-size:7.500px">ENG</text>
<path d="M855 545q5-4 11 0M857 548q3.500-2.500 7 0" fill="none" stroke="#eee"/><circle cx="860.500" cy="550.500" r="1" fill="#eee"/>
<path d="M871 545h2l3-2v8l-3-2h-2zM878 544q2 3 0 6M880 543q2 4 0 8" fill="none" stroke="#eee" stroke-width=".9"/>
<rect x="887" y="544" width="12" height="7" rx="1.500" fill="#9aa"/><path d="M893 541v6M891 545l2 2 2-2" fill="none" stroke="#3fb56e"/>
<text x="901.500" y="550" style="font-size:7.500px">100%</text>
<text x="972" y="544" text-anchor="end" style="font-size:7.500px">11:31 PM</text>
<text x="972" y="555" text-anchor="end" style="font-size:7.500px">25/02/2026</text>
<path d="M977 552q2-1 2-5a3.500 3.500 0 0 1 7 0q0 4 2 5z" fill="#5ccdf0"/><circle cx="982.500" cy="553.500" r="1.300" fill="#5ccdf0"/>
</svg>
</body></html>
